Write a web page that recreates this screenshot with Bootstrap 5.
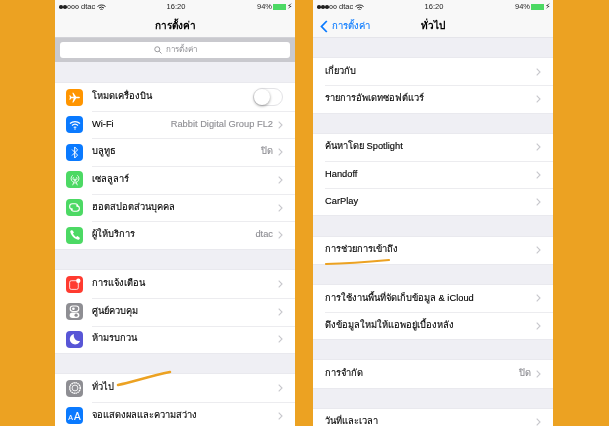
<!DOCTYPE html>
<html lang="th">
<head>
    <meta charset="UTF-8">
    <meta name="viewport" content="width=device-width, initial-scale=1.0">
    <title>การตั้งค่า</title>
    <link href="https://cdn.jsdelivr.net/npm/bootstrap@5.3.0/dist/css/bootstrap.min.css" rel="stylesheet">
    <style>
        html, body {
            height: 426px;
            overflow: hidden;
        }
        body {
            background-color: #eca222;
            font-family: "Liberation Sans", "Noto Sans", sans-serif;
            color: #000;
        }
        .stage {
            height: 426px;
            padding-left: 55px;
            gap: 18px;
        }
        .phone {
            width: 240px;
            height: 426px;
            background: #efeff4;
            overflow: hidden;
            position: relative;
            filter: blur(.3px);
        }
        .top-bar {
            height: 37px;
            background: #f8f8f8;
            box-shadow: 0 .5px 0 #dcdce0;
            position: relative;
        }
        .status-line {
            height: 13px;
            padding: 0 2px 0 4px;
            font-size: 7.5px;
            line-height: 13px;
            color: #222;
        }
        .status-line > div {
            flex: 1 1 0;
        }
        .signal i {
            display: inline-block;
            width: 3.6px;
            height: 3.6px;
            border-radius: 50%;
            background: #222;
            margin-right: .4px;
            vertical-align: .5px;
        }
        .signal i.off {
            background: none;
            border: .5px solid #555;
        }
        .batt {
            display: inline-block;
            width: 13px;
            height: 5.5px;
            background: #4cd964;
            margin: 0 1px;
            vertical-align: -0.5px;
        }
        .nav-line {
            height: 24px;
            font-size: 10px;
            font-weight: 700;
            position: relative;
        }
        .back-link {
            position: absolute;
            left: 7px;
            top: 6px;
            color: #0a7aff;
            font-weight: 400;
            font-size: 9.5px;
            -webkit-text-stroke: .12px #0a7aff;
        }
        .search-area {
            height: 25px;
            background: #c9c9ce;
            padding: 5px;
        }
        .search-field {
            height: 16px;
            background: #fff;
            border-radius: 3px;
            color: #8e8e93;
            font-size: 8px;
        }
        .band {
            height: 21.2px;
        }
        .group {
            background: #fff;
            box-shadow: 0 0 0 .5px #e4e4e8;
        }
        .cell {
            height: 27.65px;
            font-size: 9.3px;
            padding-left: 11px;
            padding-right: 12px;
            position: relative;
            -webkit-text-stroke: .12px currentColor;
        }
        .cell + .cell::before {
            content: "";
            position: absolute;
            top: 0;
            left: 37px;
            right: 0;
            border-top: 1px solid #ececef;
        }
        .plain .cell {
            height: 27.2px;
            padding-left: 12px;
        }
        .plain .cell + .cell::before {
            left: 12px;
        }
        .tile {
            width: 17px;
            height: 17px;
            border-radius: 4px;
            margin-right: 9px;
            flex: none;
        }
        .tile-small {
            font-size: 7px;
            margin-right: 1px;
        }
        .tile-text {
            font-size: 10px;
            line-height: 11px;
        }
        .val {
            color: #8e8e93;
            margin-right: 5px;
        }
        .chev {
            flex: none;
        }
        .switch-pill {
            width: 30px;
            height: 18px;
            border-radius: 9px;
            border: 1px solid #e3e3e6;
            position: relative;
            flex: none;
        }
        .switch-pill::after {
            content: "";
            position: absolute;
            left: 0;
            top: 0;
            width: 16px;
            height: 16px;
            border-radius: 50%;
            background: #fff;
            box-shadow: 0 1px 3px rgba(0, 0, 0, .4);
        }
        .c-orange { background: #ff9500; }
        .c-blue { background: #0a7aff; }
        .c-green { background: #4cd964; }
        .c-red { background: #ff3b30; }
        .c-gray { background: #8e8e93; }
        .c-indigo { background: #5856d6; }
        .scribble {
            position: absolute;
            pointer-events: none;
        }
    </style>
</head>
<body>
    <div class="stage d-flex">
        <!-- Settings -->
        <div class="phone">
            <div class="top-bar">
                <div class="status-line d-flex align-items-center">
                    <div class="signal"><i></i><i></i><i class="off"></i><i class="off"></i><i class="off"></i> dtac
                        <svg width="9" height="7" viewBox="0 0 18 14"><path d="M1 5a12 12 0 0 1 16 0M4 8a8 8 0 0 1 10 0M7 11a3.500 3.500 0 0 1 4 0" fill="none" stroke="#222" stroke-width="2"/></svg></div>
                    <div class="text-center">16:20</div>
                    <div class="text-end">94%<span class="batt"></span>⚡︎</div>
                </div>
                <div class="nav-line d-flex align-items-center justify-content-center">การตั้งค่า</div>
            </div>
            <div class="search-area">
                <div class="search-field d-flex align-items-center justify-content-center gap-1">
                    <svg width="8" height="8" viewBox="0 0 16 16"><circle cx="6.500" cy="6.500" r="5" fill="none" stroke="#8e8e93" stroke-width="1.800"/><path d="M10.500 10.500 15 15" stroke="#8e8e93" stroke-width="1.800"/></svg>
                    การตั้งค่า
                </div>
            </div>
            <div class="band"></div>
            <div class="group">
                <div class="cell d-flex align-items-center">
                    <span class="tile c-orange d-flex align-items-center justify-content-center"><svg width="13" height="13" viewBox="0 0 24 24"><path d="M22 12c0-1-1-1.500-2-1.500h-5L10 3H8l2.500 7.500H6L4 8H2.500l1 4-1 4H4l2-2.500h4.500L8 21h2l5-7.500h5c1 0 2-.5 2-1.500z" fill="#fff"/></svg></span>
                    <span class="flex-grow-1">โหมดเครื่องบิน</span>
                    <span class="switch-pill"></span>
                </div>
                <div class="cell d-flex align-items-center">
                    <span class="tile c-blue d-flex align-items-center justify-content-center"><svg width="12" height="10" viewBox="0 0 24 20"><path d="M2 7a15 15 0 0 1 20 0M6 11a9 9 0 0 1 12 0M9.500 15a4 4 0 0 1 5 0" fill="none" stroke="#fff" stroke-width="2.400"/><circle cx="12" cy="18" r="1.500" fill="#fff"/></svg></span>
                    <span class="flex-grow-1">Wi-Fi</span>
                    <span class="val">Rabbit Digital Group FL2</span>
                    <svg class="chev" width="5" height="8" viewBox="0 0 5 8"><path d="M.7.7 4 4 .7 7.300" fill="none" stroke="#c7c7cc" stroke-width="1.100"/></svg>
                </div>
                <div class="cell d-flex align-items-center">
                    <span class="tile c-blue d-flex align-items-center justify-content-center"><svg width="8" height="13" viewBox="0 0 12 20"><path d="M1.500 5.500 10 14l-4.500 4.500v-17L10 6l-8.500 8.500" fill="none" stroke="#fff" stroke-width="1.500"/></svg></span>
                    <span class="flex-grow-1">บลูทูธ</span>
                    <span class="val">ปิด</span>
                    <svg class="chev" width="5" height="8" viewBox="0 0 5 8"><path d="M.7.7 4 4 .7 7.300" fill="none" stroke="#c7c7cc" stroke-width="1.100"/></svg>
                </div>
                <div class="cell d-flex align-items-center">
                    <span class="tile c-green d-flex align-items-center justify-content-center"><svg width="14" height="14" viewBox="0 0 24 24"><g fill="none" stroke="#fff" stroke-width="1.500"><path d="M8 4a7 7 0 0 0 0 11M16 4a7 7 0 0 1 0 11M10 7a3 3 0 0 0 0 5M14 7a3 3 0 0 1 0 5M12 10l-4 11M12 10l4 11M9.500 17h5"/></g></svg></span>
                    <span class="flex-grow-1">เซลลูลาร์</span>
                    <svg class="chev" width="5" height="8" viewBox="0 0 5 8"><path d="M.7.7 4 4 .7 7.300" fill="none" stroke="#c7c7cc" stroke-width="1.100"/></svg>
                </div>
                <div class="cell d-flex align-items-center">
                    <span class="tile c-green d-flex align-items-center justify-content-center"><svg width="13" height="13" viewBox="0 0 24 24"><g fill="none" stroke="#fff" stroke-width="2"><path d="M9 15H8a5 5 0 0 1 0-10h5a5 5 0 0 1 5 5"/><path d="M15 9h1a5 5 0 0 1 0 10h-5a5 5 0 0 1-5-5"/></g></svg></span>
                    <span class="flex-grow-1">ฮอตสปอตส่วนบุคคล</span>
                    <svg class="chev" width="5" height="8" viewBox="0 0 5 8"><path d="M.7.7 4 4 .7 7.300" fill="none" stroke="#c7c7cc" stroke-width="1.100"/></svg>
                </div>
                <div class="cell d-flex align-items-center">
                    <span class="tile c-green d-flex align-items-center justify-content-center"><svg width="12" height="12" viewBox="0 0 24 24"><path d="M6 2 2.500 4C2 11 12 22 20 21.500l2-3.500-5-4-3 2c-2-1-5-5-6-7l2-2.500z" fill="#fff"/></svg></span>
                    <span class="flex-grow-1">ผู้ให้บริการ</span>
                    <span class="val">dtac</span>
                    <svg class="chev" width="5" height="8" viewBox="0 0 5 8"><path d="M.7.7 4 4 .7 7.300" fill="none" stroke="#c7c7cc" stroke-width="1.100"/></svg>
                </div>
            </div>
            <div class="band"></div>
            <div class="group">
                <div class="cell d-flex align-items-center">
                    <span class="tile c-red d-flex align-items-center justify-content-center"><svg width="13" height="13" viewBox="0 0 24 24"><rect x="3" y="5" width="16" height="16" rx="3" fill="none" stroke="#fff" stroke-width="1.500"/><circle cx="19" cy="5" r="4" fill="#fff"/></svg></span>
                    <span class="flex-grow-1">การแจ้งเตือน</span>
                    <svg class="chev" width="5" height="8" viewBox="0 0 5 8"><path d="M.7.7 4 4 .7 7.300" fill="none" stroke="#c7c7cc" stroke-width="1.100"/></svg>
                </div>
                <div class="cell d-flex align-items-center">
                    <span class="tile c-gray d-flex align-items-center justify-content-center"><svg width="11" height="14" viewBox="0 0 20 26"><rect x="2" y="2" width="16" height="10" rx="5" fill="none" stroke="#fff" stroke-width="2"/><circle cx="8" cy="7" r="2.500" fill="#fff"/><rect x="1" y="14" width="18" height="10" rx="5" fill="#fff"/><circle cx="13" cy="19" r="3" fill="#8e8e93"/></svg></span>
                    <span class="flex-grow-1">ศูนย์ควบคุม</span>
                    <svg class="chev" width="5" height="8" viewBox="0 0 5 8"><path d="M.7.7 4 4 .7 7.300" fill="none" stroke="#c7c7cc" stroke-width="1.100"/></svg>
                </div>
                <div class="cell d-flex align-items-center">
                    <span class="tile c-indigo d-flex align-items-center justify-content-center"><svg width="12" height="12" viewBox="0 0 24 24"><path d="M10 2a10.500 10.500 0 1 0 12 14A11 11 0 0 1 10 2z" fill="#fff"/></svg></span>
                    <span class="flex-grow-1">ห้ามรบกวน</span>
                    <svg class="chev" width="5" height="8" viewBox="0 0 5 8"><path d="M.7.7 4 4 .7 7.300" fill="none" stroke="#c7c7cc" stroke-width="1.100"/></svg>
                </div>
            </div>
            <div class="band"></div>
            <div class="group">
                <div class="cell d-flex align-items-center">
                    <span class="tile c-gray d-flex align-items-center justify-content-center"><svg width="14" height="14" viewBox="0 0 24 24"><circle cx="12" cy="12" r="9" fill="none" stroke="#fff" stroke-width="2.500" stroke-dasharray="2.500 1"/><circle cx="12" cy="12" r="5" fill="none" stroke="#fff" stroke-width="1.500"/></svg></span>
                    <span class="flex-grow-1">ทั่วไป</span>
                    <svg class="chev" width="5" height="8" viewBox="0 0 5 8"><path d="M.7.7 4 4 .7 7.300" fill="none" stroke="#c7c7cc" stroke-width="1.100"/></svg>
                </div>
                <div class="cell d-flex align-items-center">
                    <span class="tile tile-text c-blue d-flex align-items-baseline justify-content-center text-white pt-1"><span class="tile-small">A</span>A</span>
                    <span class="flex-grow-1">จอแสดงผลและความสว่าง</span>
                    <svg class="chev" width="5" height="8" viewBox="0 0 5 8"><path d="M.7.7 4 4 .7 7.300" fill="none" stroke="#c7c7cc" stroke-width="1.100"/></svg>
                </div>
            </div>
            <svg class="scribble" style="left:60px;top:368px" width="60" height="20" viewBox="0 0 60 20"><path d="M3 17C20 13 36 8 55 4" fill="none" stroke="#eca222" stroke-width="2.500" stroke-linecap="round"/></svg>
        </div>

        <!-- General -->
        <div class="phone">
            <div class="top-bar">
                <div class="status-line d-flex align-items-center">
                    <div class="signal"><i></i><i></i><i></i><i class="off"></i><i class="off"></i> dtac
                        <svg width="9" height="7" viewBox="0 0 18 14"><path d="M1 5a12 12 0 0 1 16 0M4 8a8 8 0 0 1 10 0M7 11a3.500 3.500 0 0 1 4 0" fill="none" stroke="#222" stroke-width="2"/></svg></div>
                    <div class="text-center">16:20</div>
                    <div class="text-end">94%<span class="batt"></span>⚡︎</div>
                </div>
                <div class="nav-line d-flex align-items-center justify-content-center">
                    <span class="back-link d-flex align-items-center gap-1"><svg width="8" height="13" viewBox="0 0 8 13"><path d="M6.800 1 1.500 6.500 6.800 12" fill="none" stroke="#0a7aff" stroke-width="1.800"/></svg>การตั้งค่า</span>
                    ทั่วไป
                </div>
            </div>
            <div class="band"></div>
            <div class="group plain">
                <div class="cell d-flex align-items-center"><span class="flex-grow-1">เกี่ยวกับ</span><svg class="chev" width="5" height="8" viewBox="0 0 5 8"><path d="M.7.7 4 4 .7 7.300" fill="none" stroke="#c7c7cc" stroke-width="1.100"/></svg></div>
                <div class="cell d-flex align-items-center"><span class="flex-grow-1">รายการอัพเดทซอฟต์แวร์</span><svg class="chev" width="5" height="8" viewBox="0 0 5 8"><path d="M.7.7 4 4 .7 7.300" fill="none" stroke="#c7c7cc" stroke-width="1.100"/></svg></div>
            </div>
            <div class="band"></div>
            <div class="group plain">
                <div class="cell d-flex align-items-center"><span class="flex-grow-1">ค้นหาโดย Spotlight</span><svg class="chev" width="5" height="8" viewBox="0 0 5 8"><path d="M.7.7 4 4 .7 7.300" fill="none" stroke="#c7c7cc" stroke-width="1.100"/></svg></div>
                <div class="cell d-flex align-items-center"><span class="flex-grow-1">Handoff</span><svg class="chev" width="5" height="8" viewBox="0 0 5 8"><path d="M.7.7 4 4 .7 7.300" fill="none" stroke="#c7c7cc" stroke-width="1.100"/></svg></div>
                <div class="cell d-flex align-items-center"><span class="flex-grow-1">CarPlay</span><svg class="chev" width="5" height="8" viewBox="0 0 5 8"><path d="M.7.7 4 4 .7 7.300" fill="none" stroke="#c7c7cc" stroke-width="1.100"/></svg></div>
            </div>
            <div class="band"></div>
            <div class="group plain">
                <div class="cell d-flex align-items-center"><span class="flex-grow-1">การช่วยการเข้าถึง</span><svg class="chev" width="5" height="8" viewBox="0 0 5 8"><path d="M.7.7 4 4 .7 7.300" fill="none" stroke="#c7c7cc" stroke-width="1.100"/></svg></div>
            </div>
            <div class="band"></div>
            <div class="group plain">
                <div class="cell d-flex align-items-center"><span class="flex-grow-1">การใช้งานพื้นที่จัดเก็บข้อมูล &amp; iCloud</span><svg class="chev" width="5" height="8" viewBox="0 0 5 8"><path d="M.7.7 4 4 .7 7.300" fill="none" stroke="#c7c7cc" stroke-width="1.100"/></svg></div>
                <div class="cell d-flex align-items-center"><span class="flex-grow-1">ดึงข้อมูลใหม่ให้แอพอยู่เบื้องหลัง</span><svg class="chev" width="5" height="8" viewBox="0 0 5 8"><path d="M.7.7 4 4 .7 7.300" fill="none" stroke="#c7c7cc" stroke-width="1.100"/></svg></div>
            </div>
            <div class="band"></div>
            <div class="group plain">
                <div class="cell d-flex align-items-center"><span class="flex-grow-1">การจำกัด</span><span class="val">ปิด</span><svg class="chev" width="5" height="8" viewBox="0 0 5 8"><path d="M.7.7 4 4 .7 7.300" fill="none" stroke="#c7c7cc" stroke-width="1.100"/></svg></div>
            </div>
            <div class="band"></div>
            <div class="group plain">
                <div class="cell d-flex align-items-center"><span class="flex-grow-1">วันที่และเวลา</span><svg class="chev" width="5" height="8" viewBox="0 0 5 8"><path d="M.7.7 4 4 .7 7.300" fill="none" stroke="#c7c7cc" stroke-width="1.100"/></svg></div>
            </div>
            <svg class="scribble" style="left:10px;top:257px" width="70" height="10" viewBox="0 0 70 10"><path d="M3 7C24 6.500 44 5 66 3" fill="none" stroke="#eca222" stroke-width="2.200" stroke-linecap="round"/></svg>
        </div>
    </div>

    <script src="https://cdn.jsdelivr.net/npm/bootstrap@5.3.0/dist/js/bootstrap.bundle.min.js"></script>
</body>
</html>
